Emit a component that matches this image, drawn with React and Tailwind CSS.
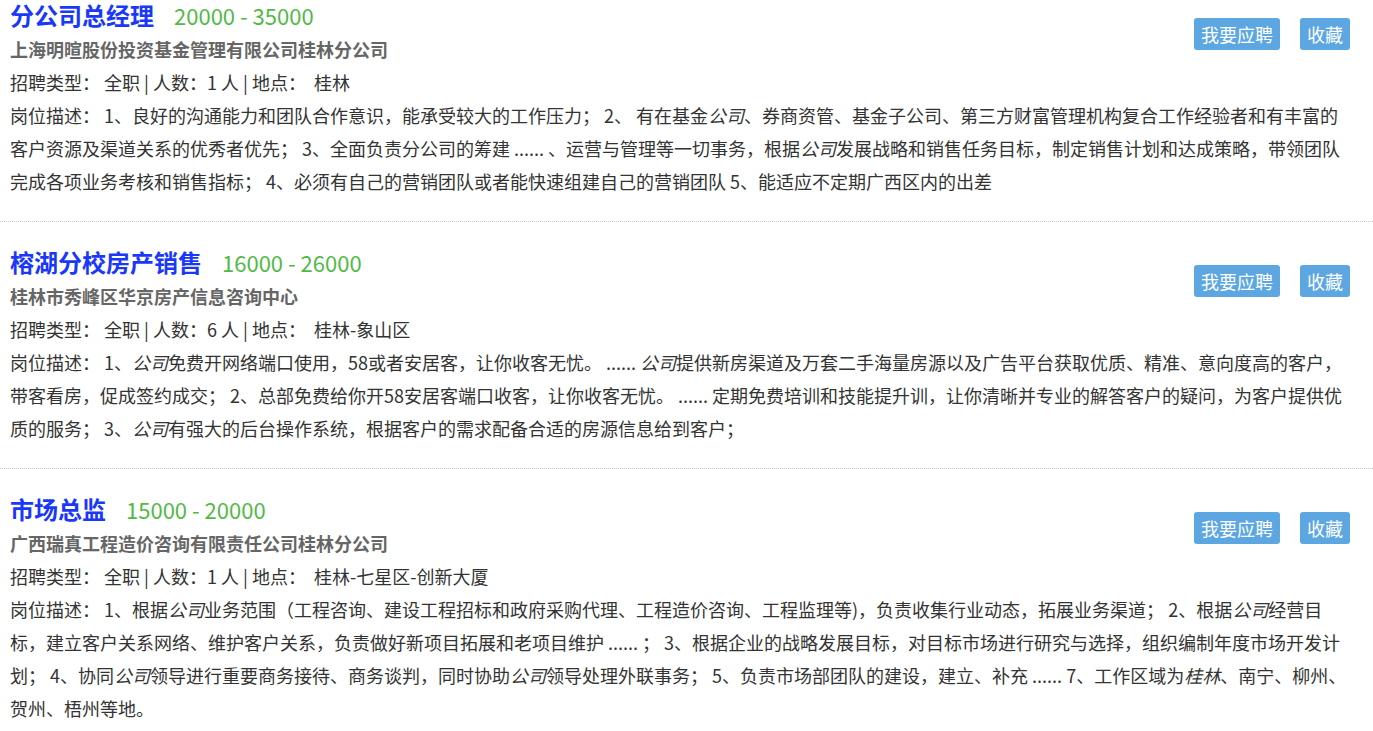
const JOBS = [
  {
    title: '分公司总经理',
    salary: '20000 - 35000',
    company: '上海明暄股份投资基金管理有限公司桂林分公司',
    meta: '招聘类型： 全职 | 人数：1 人 | 地点：\u00a0 桂林',
    desc: [
      '岗位描述： 1、良好的沟通能力和团队合作意识，能承受较大的工作压力； 2、 有在基金',
      { em: '公司' },
      '、券商资管、基金子公司、第三方财富管理机构复合工作经验者和有丰富的客户资源及渠道关系的优秀者优先； 3、全面负责分公司的筹建 ...... 、运营与管理等一切事务，根据',
      { em: '公司' },
      '发展战略和销售任务目标，制定销售计划和达成策略，带领团队完成各项业务考核和销售指标； 4、必须有自己的营销团队或者能快速组建自己的营销团队 5、能适应不定期广西区内的出差',
    ],
  },
  {
    title: '榕湖分校房产销售',
    salary: '16000 - 26000',
    company: '桂林市秀峰区华京房产信息咨询中心',
    meta: '招聘类型： 全职 | 人数：6 人 | 地点：\u00a0 桂林-象山区',
    desc: [
      '岗位描述： 1、',
      { em: '公司' },
      '免费开网络端口使用，58或者安居客，让你收客无忧。 ...... ',
      { em: '公司' },
      '提供新房渠道及万套二手海量房源以及广告平台获取优质、精准、意向度高的客户，带客看房，促成签约成交； 2、总部免费给你开58安居客端口收客，让你收客无忧。 ...... 定期免费培训和技能提升训，让你清晰并专业的解答客户的疑问，为客户提供优质的服务； 3、',
      { em: '公司' },
      '有强大的后台操作系统，根据客户的需求配备合适的房源信息给到客户；',
    ],
  },
  {
    title: '市场总监',
    salary: '15000 - 20000',
    company: '广西瑞真工程造价咨询有限责任公司桂林分公司',
    meta: '招聘类型： 全职 | 人数：1 人 | 地点：\u00a0 桂林-七星区-创新大厦',
    desc: [
      '岗位描述： 1、根据',
      { em: '公司' },
      '业务范围（工程咨询、建设工程招标和政府采购代理、工程造价咨询、工程监理等)，负责收集行业动态，拓展业务渠道； 2、根据',
      { em: '公司' },
      '经营目标，建立客户关系网络、维护客户关系，负责做好新项目拓展和老项目维护 ...... ； 3、根据企业的战略发展目标，对目标市场进行研究与选择，组织编制年度市场开发计划； 4、协同',
      { em: '公司' },
      '领导进行重要商务接待、商务谈判，同时协助',
      { em: '公司' },
      '领导处理外联事务； 5、负责市场部团队的建设，建立、补充 ...... 7、工作区域为',
      { em: '桂林' },
      '、南宁、柳州、贺州、梧州等地。',
    ],
  },
];

function JobItem({ job, first, last }) {
  return (
    <div
      className={[
        'pl-[10px] pr-[21px]',
        first ? 'pt-0' : 'pt-[25px]',
        last ? 'pb-4' : 'pb-[23px] border-b border-dotted border-[#c8c8c8]',
      ].join(' ')}
    >
      <div className="flex items-start justify-between">
        <div>
          <div className="flex items-baseline h-[30px] leading-[30px]">
            <span className="text-[24px] font-bold text-[#1a38fa]">{job.title}</span>
            <span className="ml-5 text-[22px] text-[#52b947]">{job.salary}</span>
          </div>
          <div className="mt-[3px] text-[18px] leading-[33px] font-bold text-[#666]">{job.company}</div>
          <div className="text-[18px] leading-[33px] text-[#333]">{job.meta}</div>
        </div>
        <div className="flex gap-5 mt-[18px] mr-[2px]">
          <button
            type="button"
            className="h-8 px-[7px] rounded-[3px] bg-[#5ca6e2] text-white text-[18px] leading-8"
          >
            我要应聘
          </button>
          <button
            type="button"
            className="h-8 px-[7px] rounded-[3px] bg-[#5ca6e2] text-white text-[18px] leading-8"
          >
            收藏
          </button>
        </div>
      </div>
      <p className="text-[18px] leading-[33px] text-[#333]">
        {job.desc.map((part, i) =>
          typeof part === 'string' ? <span key={i}>{part}</span> : <em key={i}>{part.em}</em>
        )}
      </p>
    </div>
  );
}

export default function App() {
  return (
    <div
      className="bg-white min-h-screen"
      style={{ fontFamily: '"Noto Sans CJK SC", "Noto Sans", sans-serif' }}
    >
      {JOBS.map((job, i) => (
        <JobItem key={job.title} job={job} first={i === 0} last={i === JOBS.length - 1} />
      ))}
    </div>
  );
}
